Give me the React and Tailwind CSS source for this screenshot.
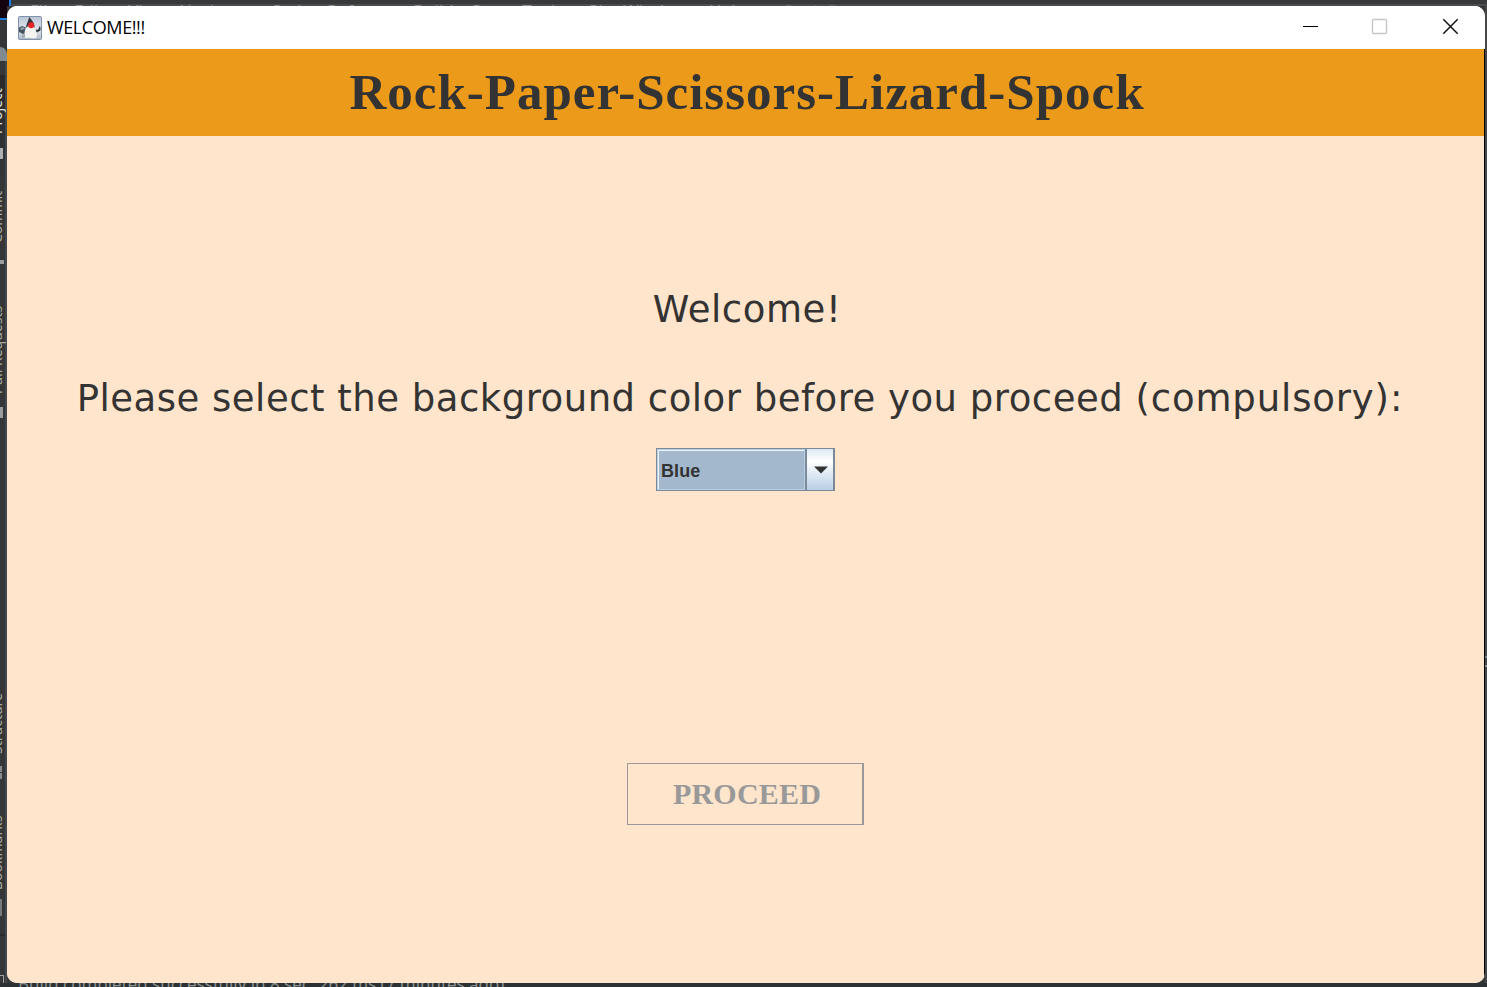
import React from "react";

const menus = [
  ["File", "w-[44px]"], ["Edit", "w-[54px]"], ["View", "w-[51px]"],
  ["Navigate", "w-[91px]"], ["Code", "w-[57px]"], ["Refactor", "w-[86px]"],
  ["Build", "w-[59px]"], ["Run", "w-[50px]"], ["Tools", "w-[64px]"],
  ["Git", "w-[37px]"], ["Window", "w-[86px]"], ["Help", "w-[75px]"],
  ["Rock-Paper", "w-[100px] opacity-40"],
];

const sideTabs = [
  { name: "Project", tab: "mt-[25px] h-[50px] text-[#e0e0d8]", mark: "mt-[12px] h-[11px] w-[3px] bg-[#aeb0b1]" },
  { name: "Commit", tab: "mt-[30px] h-[56px] text-[#a9a99c]", mark: "mt-[15px] h-[4px] w-[4px] bg-[#9b9d9f]" },
  { name: "Pull Requests", tab: "mt-[38px] h-[95px] text-[#a9a99c]", mark: "mt-[10px] h-[11px] w-[3px] bg-[#9b9d9f]" },
  { name: "Structure", tab: "mt-[273px] h-[66px] text-[#a9a99c]", mark: "mt-[9px] h-[13px] w-[2px] border-y-[6px] border-[#87898b]" },
  { name: "Bookmarks", tab: "mt-[34px] h-[80px] text-[#a9a99c]", mark: "mt-[6px] h-[17px] w-[2px] bg-[#77797b]" },
];

function Backdrop() {
  return (
    <div className="flex h-[987px] w-full flex-col font-['Noto_Sans',sans-serif]">
      <header className="flex h-[6px] shrink-0 overflow-hidden bg-gradient-to-b from-[#37393b] from-75% to-[#4b4c4e] to-75%">
        <div className="w-[11px] shrink-0 border-r-2 border-[#1c7ddf] bg-[#14040f]" />
        <nav className="flex pl-[19px] pt-[2px] text-[17px] leading-[17px] text-[#8b8c8e]">
          {menus.map(([label, width]) => (
            <span key={label} className={`shrink-0 whitespace-nowrap ${width}`}>{label}</span>
          ))}
        </nav>
      </header>
      <div className="flex min-h-0 flex-1 justify-between">
        <aside className="flex w-[7px] flex-col overflow-hidden bg-gradient-to-b from-[#343638] from-[69px] via-[#29292a] via-[69px] to-[#343638] to-[170px]">
          <div className="h-[14px] shrink-0 border-b-2 border-[#1c7ddf] bg-[#14040f]" />
          <div className="mt-[27px] h-[14px] shrink-0 rounded-tr-lg bg-[#808b91]" />
          <div className="flex flex-1 flex-col border-r-2 border-[#42484d]">
            {sideTabs.map(({ name, tab, mark }) => (
              <React.Fragment key={name}>
                <span className={`-ml-[12px] flex w-[17px] shrink-0 rotate-180 items-center justify-center whitespace-nowrap text-[14px] leading-[16px] [writing-mode:vertical-rl] ${tab}`}>{name}</span>
                <div className={`shrink-0 ${mark}`} />
              </React.Fragment>
            ))}
            <div className="mt-[18px] h-[2px] shrink-0 bg-[#292b2c]" />
            <div className="mt-[39px] h-[8px] w-[4px] shrink-0 border-r border-t border-[#a0a1a2]" />
          </div>
        </aside>
        <aside className="flex w-[2px] flex-col gap-[7px] bg-[#444648] pt-[650px]">
          <div className="h-[2px] bg-[#76828e]" />
          <div className="h-[2px] bg-[#8d8f90]" />
        </aside>
      </div>
      <footer className="flex h-[4px] shrink-0 overflow-hidden bg-[#2c3233] pl-[18px] text-[17px] leading-[17px] tracking-[-0.03px] text-[#8a9190]">
        <span className="-mt-[8px] whitespace-nowrap">Build completed successfully in 8 sec, 262 ms (7 minutes ago)</span>
      </footer>
    </div>
  );
}

function JavaIcon() {
  return (
    <svg width="24" height="24" viewBox="0 0 24 24">
      <defs>
        <linearGradient id="sky" x1="0" y1="0" x2="0" y2="1">
          <stop offset="0" stopColor="#b9c4d6" />
          <stop offset=".6" stopColor="#e6ebf2" />
          <stop offset="1" stopColor="#a9b4c2" />
        </linearGradient>
      </defs>
      <rect x=".5" y=".5" width="23" height="23" rx="1" fill="url(#sky)" stroke="#7f93a8" />
      <path d="M1 11.500l3-1.500 5 2-1 5-3 1-4-2z" fill="#46525e" />
      <path d="M2 12l3-1 2 2-4 1z" fill="#8fa3b5" />
      <path d="M17 13l2 1 1.500-1 1-3 1 1v3.500l-3.500 2-2-1z" fill="#343b43" />
      <path d="M9 9c-2 4-3 8-2.500 12 1 1.300 2.500 1 4 .8 2 .2 5 1 8 .2 1-4-.5-9-3-13z" fill="#f4f4f2" />
      <path d="M4 19l3-2v4l-3 1z" fill="#a5adb5" />
      <path d="M11 1c0 3-2.500 6-3 11 2-2 3-2.500 4-2.500 2 0 3.500 1 4.500 2.500.5-4-2-7.500-5.500-11z" fill="#33363a" />
      <circle cx="13.200" cy="9.300" r="3" fill="#ed2224" />
    </svg>
  );
}

function TitleBar() {
  return (
    <div className="flex h-[43px] shrink-0 items-center bg-white pl-[11px]">
      <JavaIcon />
      <span className="ml-[5px] pb-[2px] font-['Open_Sans',sans-serif] text-[18px] leading-6 tracking-[-0.4px] text-black">WELCOME!!!</span>
      <svg className="ml-auto" width="182" height="43" viewBox="0 0 182 43" fill="none">
        <path d="M0 20.500h15" stroke="#000" />
        <rect x="69.500" y="13.500" width="14" height="14" rx="1" stroke="#c6c6c6" strokeWidth="1.400" />
        <path d="M140.300 13.300l14.400 14.400M154.700 13.300L140.300 27.700" stroke="#111" strokeWidth="1.500" />
      </svg>
    </div>
  );
}

function ColorSelect() {
  return (
    <button className="flex h-[43px] w-[179px] border border-r-2 border-[#7a8a99] bg-white text-left">
      <span className="flex flex-1 items-center border border-[#b8cfe5] bg-[#a3b8cc]">
        <span className="flex h-full w-full items-center border-l border-t border-[#eef3f8] pl-[2px] pt-[1px] font-['Liberation_Sans',sans-serif] text-[18px] font-bold leading-5 tracking-[0.1px] text-[#333333]">Blue</span>
      </span>
      <span className="flex h-full w-[28px] items-center justify-center border-l-2 border-[#7a8a99] bg-gradient-to-b from-[#dde8f3] via-white via-30% to-[#b8cfe5]">
        <svg className="ml-[2px]" width="14" height="8" viewBox="0 0 14 8"><path d="M0 .5h14L7 7.500z" fill="#333" /></svg>
      </span>
    </button>
  );
}

export default function App() {
  return (
    <div className="relative h-[987px] w-[1487px] overflow-hidden bg-[#343638]">
      <Backdrop />
      <div className="absolute left-[7px] top-[6px] flex h-[977px] w-[1478px] flex-col overflow-hidden rounded-[10px] bg-white">
        <TitleBar />
        <main className="flex flex-1 flex-col items-center border-r border-black bg-[#ffe5cc] text-[#333333]">
          <h1 className="flex h-[87px] w-full items-center justify-center bg-[#eb9a19] pb-[2px] pl-[3px] font-['Liberation_Serif',serif] text-[51px] font-bold leading-[58px] tracking-[1px]">
            Rock-Paper-Scissors-Lizard-Spock
          </h1>
          <div className="flex flex-col items-center gap-[45px] whitespace-nowrap pt-[152px] font-['DejaVu_Sans',sans-serif] text-[37px] leading-[44px]">
            <p className="pl-[3px] tracking-[0.57px]">Welcome!</p>
            <p className="pr-[11px] tracking-[0.5px]">
              Please select the background color before you proceed <span className="tracking-[0.86px]">(compulsory):</span>
            </p>
          </div>
          <div className="mt-[27px] flex flex-col items-center gap-[272px]">
            <ColorSelect />
            <button className="flex h-[62px] w-[237px] items-center justify-center border border-r-2 border-[#999999] pl-[4px] font-['Liberation_Serif',serif] text-[30px] font-bold leading-[34px] tracking-[0.2px] text-[#999999]">
              PROCEED
            </button>
          </div>
        </main>
      </div>
    </div>
  );
}
